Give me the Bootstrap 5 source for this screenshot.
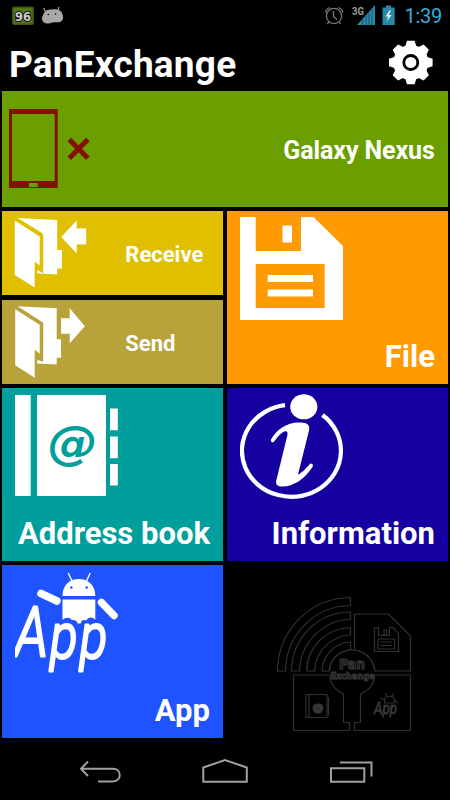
<!DOCTYPE html>
<html lang="en">
<head>
<meta charset="utf-8">
<meta name="viewport" content="width=device-width, initial-scale=1">
<title>PanExchange</title>
<link href="https://cdn.jsdelivr.net/npm/bootstrap@5.3.0/dist/css/bootstrap.min.css" rel="stylesheet">
<style>
html,body{height:100%}
body{background:#000;color:#fff;font-family:Roboto,"Liberation Sans",sans-serif;overflow:hidden}
.screen{width:450px;height:800px}
.status{height:32px;padding:0 8px 0 11px}
.clock{color:#35aedb;font-size:20px;line-height:32px;width:38px;letter-spacing:-.25px}
.titlebar{height:59px;padding:0 16px 0 9px}
.titlebar h1{font-size:37px;line-height:65px;letter-spacing:.2px}
.tiles{padding:0 2.3px;gap:4.6px}
.duo{display:grid;grid-template-columns:220.4px 220.4px;gap:4.6px;height:172.5px}
.tile{color:#fff;text-decoration:none}
.tile svg,.logo svg{display:block;flex:none}
.device{height:115.5px;background:#6b9f00;padding:0 13px 0 6.7px;font-size:25px}
.device span{padding-top:4px;letter-spacing:-.1px}
.half{height:84px;font-size:22px}
.half .txt{padding:2px 0 0 21px}
.receive{background:#dfbf00}
.send{background:#b8a23a}
.send .txt{padding-top:4px}
.big{padding:6px 12.7px 4px;font-size:31px;line-height:46px}
.file{background:#ff9a00}
.address{background:#009f9b}
.info{background:#1500a0}
.app{background:#1f53ff}
.logo{padding:25px 0 0 8px}
.navkeys{height:60px}
</style>
</head>
<body>
<main class="screen d-flex flex-column">
  <div class="status d-flex justify-content-between align-items-center">
    <svg width="56" height="32" viewBox="11 0 56 32">
      <rect x="12" y="6.5" width="22" height="18.5" rx="2" fill="#3d5512"/>
      <rect x="13.5" y="8" width="19" height="15.500" rx="1" fill="#57761b"/>
      <text x="23" y="20.500" text-anchor="middle" font-family="DejaVu Sans" font-size="12.500" font-weight="bold" textLength="16" lengthAdjust="spacingAndGlyphs" fill="#ccc" stroke="#111" stroke-width="2" paint-order="stroke">96</text>
      <path d="M45 11l-1.300-3M58 10l1-3" stroke="#a8a8a8" stroke-width="1.200"/>
      <path d="M44 13C45 10 49 9 52 9.500c4-1 9 0 10 3.500 1.500 3 1.500 7-1 8.500-3 1.500-5 .5-8 .8-2 .5-3 1.500-5.500 1.200-3-.2-5.300-1.500-5.500-4.500C42 16.500 43 15 44 13z" fill="#a8a8a8"/>
      <circle cx="48.300" cy="14.500" r=".8"/><circle cx="55.500" cy="14" r=".8"/>
    </svg>
    <div class="d-flex align-items-center">
      <svg width="80" height="32" viewBox="324 0 80 32">
        <g fill="none" stroke="#777" stroke-width="1.300">
          <circle cx="334" cy="16" r="7.600"/>
          <path d="M333.500 11v5.500l3.500 3M325.500 12.500c.5-2.500 2-4 4.300-5M338.500 7.500c2.300 1 4 2.500 4.500 5M329 22l-1.800 2.200M339 22l1.800 2.200"/>
        </g>
        <text x="352" y="14.500" font-family="Roboto" font-size="10.500" font-weight="bold" textLength="12" lengthAdjust="spacingAndGlyphs" fill="#999">3G</text>
        <path d="M375 5v20h-18z" fill="#2c88a8"/>
        <path d="M362.500 18v7M366 15v10M369 11v14M372 8v17" stroke="#104b60" stroke-width=".8"/>
        <path d="M382.500 7.500h3.500V5.500h5v2h3.700V25h-12.200z" fill="#2c88a8"/>
        <path d="M389.500 10.500l-4 6h2.700l-1.500 5 5-6.500h-3l2.300-4.500z" fill="#e8f4f8"/>
      </svg>
      <div class="clock text-end">1:39</div>
    </div>
  </div>

  <header class="titlebar d-flex justify-content-between">
    <h1 class="fw-bold m-0">PanExchange</h1>
    <svg width="46" height="59" viewBox="388 32 46 59">
      <g fill="#fff">
        <circle cx="410.800" cy="62.500" r="17.600"/>
        <path id="tooth" d="M405 47l2-6.300h7.600l2 6.300v31l-2 6.300h-7.600l-2-6.300z"/>
        <use href="#tooth" transform="rotate(45 410.800 62.500)"/>
        <use href="#tooth" transform="rotate(90 410.800 62.500)"/>
        <use href="#tooth" transform="rotate(135 410.800 62.500)"/>
      </g>
      <circle cx="410.800" cy="62.500" r="7" fill="none" stroke="#000" stroke-width="2.800"/>
    </svg>
  </header>

  <section class="tiles d-flex flex-column">
    <a href="#" class="tile device d-flex align-items-center justify-content-between fw-bold">
      <svg width="84" height="80" viewBox="9 109 84 80">
        <path fill="#7f1200" fill-rule="evenodd" d="M9 109h48.700v79H9zM12 114v67h42.700v-67zM29 183v4h8.700v-4z"/>
        <path d="M69.300 139.500l18.500 18.700M87.800 139.500l-18.500 18.700" stroke="#7f1200" stroke-width="5"/>
      </svg>
      <span>Galaxy Nexus</span>
    </a>

    <div class="duo">
      <div class="d-flex flex-column justify-content-between">
        <a href="#" class="tile half receive d-flex align-items-center fw-bold">
          <svg width="102" height="84" viewBox="2.300 211 102 84" fill="#fff">
            <path d="M18 218l39.500 2v30h4.700v18.500h-4.700v6l-20-1v-3.500l5.500 1.500v-38z"/>
            <path d="M15 219l27 16.500v35l-7-5V275" fill="none" stroke="#dfbf00" stroke-width="3"/>
            <path d="M15 220.500l25 16v29l-5-4v26L15 275z"/>
            <path d="M61.500 237l15.500-16.500V228.500h9.500v16H77v9z"/>
          </svg>
          <span class="txt">Receive</span>
        </a>
        <a href="#" class="tile half send d-flex align-items-center fw-bold">
          <svg width="102" height="84" viewBox="2.300 299.700 102 84" fill="#fff">
            <path d="M18 306l39 2v31h4.300v18.500H57v6.800l-19.500-1v-3.500l5.500 1.500v-39z"/>
            <path d="M15.500 307.500l26.500 16v35l-7-5V364" fill="none" stroke="#b8a23a" stroke-width="3"/>
            <path d="M15.500 309l24.500 15.500v29l-5-4v28L15.500 365z"/>
            <path d="M61.300 318H70v-10l15.200 18L70 343v-9.500h-8.700z"/>
          </svg>
          <span class="txt">Send</span>
        </a>
      </div>
      <a href="#" class="tile big file d-flex flex-column justify-content-between fw-bold">
        <svg width="103" height="103" viewBox="240 217 103 103" fill="#fff">
          <path fill-rule="evenodd" d="M240 217h15.700v34H301v-34h12.500l29.500 29v74H240zM255.700 264v44h69v-44z"/>
          <path d="M282.500 225.500h9.500v17h-9.500zM267.700 275H313v7h-45.300zM267.700 289.500H313v7h-45.300z"/>
        </svg>
        <span class="text-end">File</span>
      </a>
    </div>

    <div class="duo">
      <a href="#" class="tile big address d-flex flex-column justify-content-between fw-bold">
        <svg width="104" height="103" viewBox="15 394.500 104 103">
          <path fill="#fff" d="M15 395.500h15.700v101H15zM37 395.500h69v101H37zM110 409h7.800v21.700H110zM110 437h7.800v21.700H110zM110 464.500h7.800V486H110z"/>
          <text x="47.800" y="459" font-family="DejaVu Sans" font-weight="bold" font-style="italic" font-size="46" textLength="50" lengthAdjust="spacingAndGlyphs" fill="#009f9b">@</text>
        </svg>
        <span class="text-end">Address book</span>
      </a>
      <a href="#" class="tile big info d-flex flex-column justify-content-between fw-bold">
        <svg width="103" height="105" viewBox="240 394.500 103 105">
          <path d="M285 405.700A49.500 46 0 1 0 322.500 415.500" fill="none" stroke="#fff" stroke-width="4.200"/>
          <ellipse cx="303.800" cy="407.300" rx="13.600" ry="12.500" fill="#fff"/>
          <path fill="#fff" d="M271 440c5-10 17-18 30-17 7 0 9 3 8 8l-11 44c2 0 8-6 12.300-11 2 0 3 1 2.500 3-8 13-20 20-30 20-5 0-7.500-1.500-6.500-6l11-45c.8-4-.5-5-3-4-4 1.500-7 6-10.500 10.500-2 1-3.500-.5-2.800-2.500z"/>
        </svg>
        <span class="text-end">Information</span>
      </a>
    </div>

    <div class="duo">
      <a href="#" class="tile big app d-flex flex-column justify-content-between fw-bold">
        <svg width="104" height="104" viewBox="15 571 104 104">
          <g fill="#fff">
            <path d="M62.500 596c0-11 7-17 16.300-17s16.500 6 16.500 17z"/>
            <path d="M62.500 599.500h32.800V620c-3-3.500-7-3-9 .5-3-1-5-.5-5.500 3h-3c-1-3-3-4-6-3.500-2-3-6-3-9.300 0z"/>
            <g stroke="#fff" stroke-linecap="round">
              <path d="M68.500 573.500l3.500 7.500M90 573.500l-3.500 7.500" stroke-width="1.400"/>
              <path d="M41 593.500l16 7.500M101.500 602.500l12.500 13" stroke-width="7.500"/>
            </g>
          </g>
          <circle cx="71.300" cy="587.500" r="1.300" fill="#1f53ff"/><circle cx="86.700" cy="587.500" r="1.300" fill="#1f53ff"/>
          <text transform="translate(15 656) scale(.8 1)" font-family="Roboto" font-style="italic" font-weight="300" fill="#fff" stroke="#fff" stroke-width="3" stroke-linejoin="round" font-size="68">A<tspan font-size="63" dx="3" dy="2">p</tspan><tspan font-size="63" dx="3">p</tspan></text>
        </svg>
        <span class="text-end">App</span>
      </a>
      <div class="logo d-flex justify-content-center">
        <svg width="155" height="147" viewBox="264 590 155 147" fill="none" stroke="#303030" stroke-width="1.200">
          <path d="M350.500 597.500v8C315 606 286 634 285.500 671h-8C278 630 310 598 350.500 597.500z"/>
          <path d="M350.500 612v7.500C323 620 300 643 299.500 671h-8C292 638 318 612 350.500 612z"/>
          <path d="M350.500 627.500v7.500C332 635.500 315 651 314.500 671h-7.700C307 646 327 628 350.500 627.500z"/>
          <path d="M350.500 642v7.500C338 652 330 660 329 671h-7C323 655 334 643 350.500 642z"/>
          <path d="M354.500 650v-36h34l22 22v35H375C373 659 365 651 354.500 650zM330 675h-36.500v55.500h56v-8h-6V694C335 690 330 684 330 675zM374.500 675h36v55.500h-56v-8h6V694c9-4 14-10 14-19z"/>
          <path d="M329.500 671c1-13 10-21 22-21 13 0 22 9 23.500 21"/>
          <path d="M374.500 628v23.500h24v-18l-6-6h-3v8h-11v-8zM378 639h16.500v10H378zM384 630h3v5h-3zM380.500 642H392M380.500 645.500H392"/>
          <path d="M306 694.500h3v23h-3zM309 694.500h18v23h-18zM328.500 697v18.500"/>
          <path d="M384.500 700c0-5 10-5 10 0v3h-10zM387 696l-2-3M392 696l2-3M380 698l5 2M394 700l4 3"/>
          <g fill="#111" stroke="#383838" font-family="DejaVu Sans" font-weight="bold">
            <text x="339" y="669" font-size="14" textLength="26" lengthAdjust="spacingAndGlyphs">Pan</text>
            <text x="330.500" y="678.500" font-size="8.500" stroke-width=".9" textLength="44" lengthAdjust="spacingAndGlyphs">Exchange</text>
            <text x="312.500" y="710.500" font-size="11" textLength="11" lengthAdjust="spacingAndGlyphs">@</text>
            <text x="374" y="714" font-family="Roboto" font-style="italic" font-weight="400" font-size="16" stroke-width="1" textLength="23" lengthAdjust="spacingAndGlyphs">App</text>
          </g>
        </svg>
      </div>
    </div>
  </section>

  <nav class="navkeys mt-auto d-flex justify-content-center align-items-center">
    <svg width="300" height="60" viewBox="75 740 300 60" fill="none" stroke="#a0a0a0" stroke-width="2">
      <path d="M88 761.500l-7 7.200 7 7.300M81 768.700h32c9 0 9 12.700 0 12.700H98"/>
      <path d="M203.300 767.500v14.200h43.500v-14.200L225 760z"/>
      <path d="M331 768.300h33.300v13.500H331zM340 762.500h31.500V776.500"/>
    </svg>
  </nav>
</main>
<script src="https://cdn.jsdelivr.net/npm/bootstrap@5.3.0/dist/js/bootstrap.bundle.min.js"></script>
</body>
</html>
